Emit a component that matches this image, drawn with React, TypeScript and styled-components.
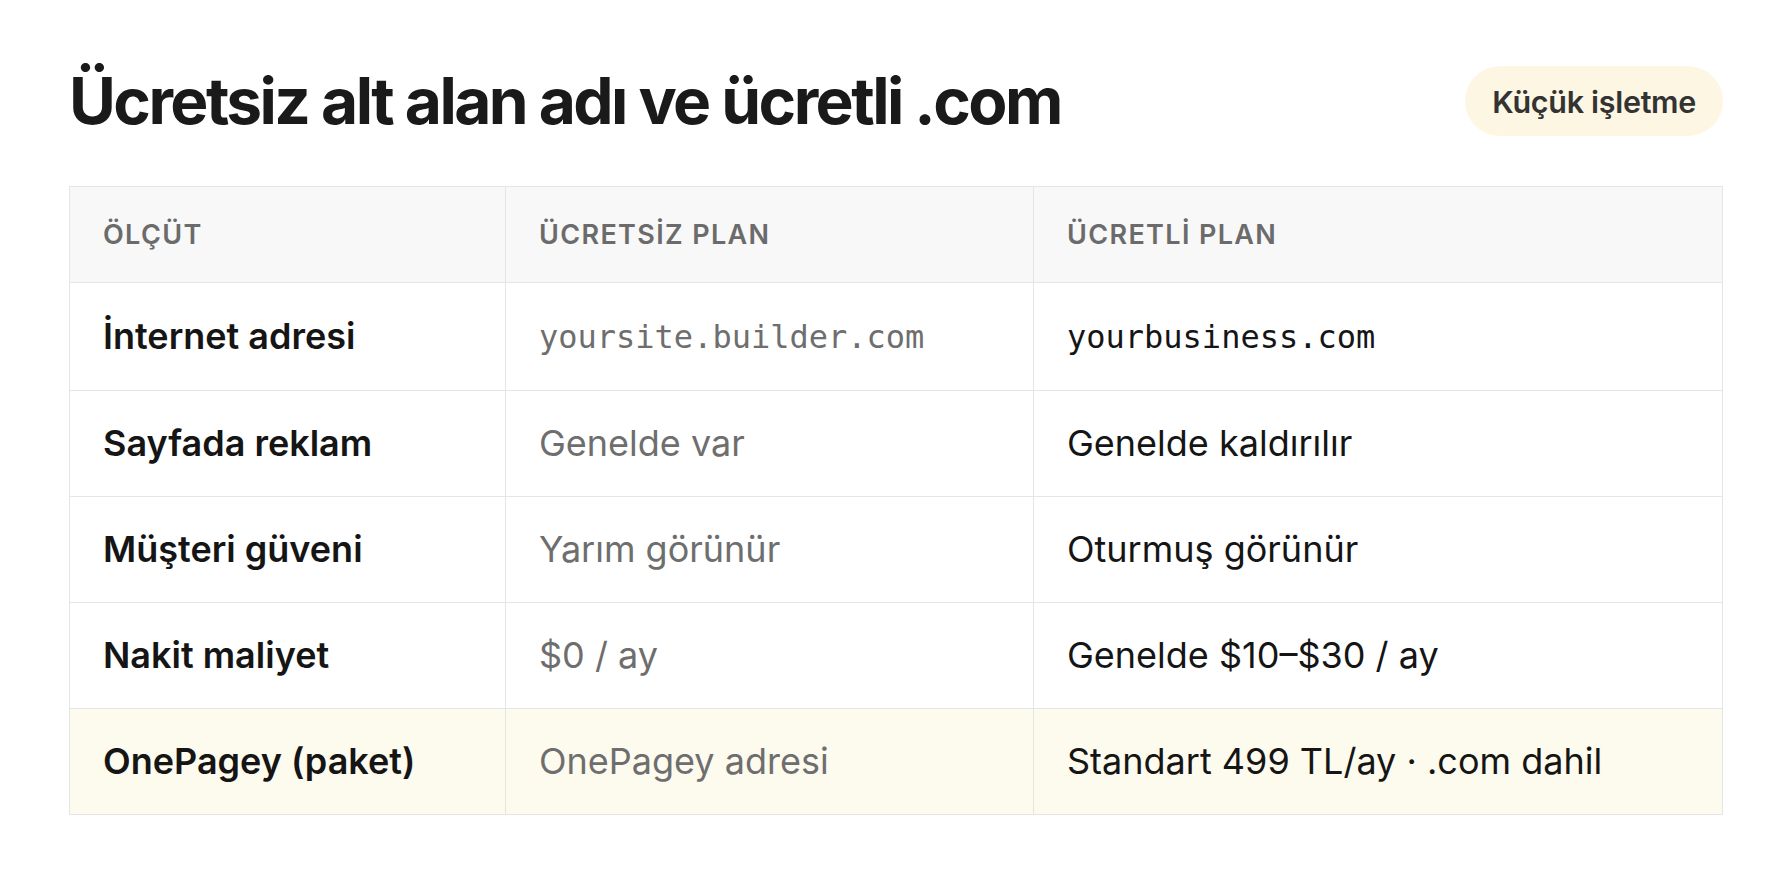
import React from 'react';
import styled, { createGlobalStyle } from 'styled-components';

const GlobalStyle = createGlobalStyle`
  html, body {
    margin: 0;
    padding: 0;
    background: #ffffff;
  }
  body {
    font-family: "Inter", "Noto Sans", sans-serif;
    color: #1a1a1a;
    -webkit-font-smoothing: antialiased;
  }
`;

const Page = styled.div`
  padding: 66px 69px 60px;
`;

const Header = styled.div`
  display: flex;
  align-items: center;
  justify-content: space-between;
  height: 70px;
  margin-bottom: 50px;
`;

const Title = styled.h1`
  margin: 0;
  font-size: 64px;
  line-height: 70px;
  font-weight: 700;
  letter-spacing: -0.04em;
  color: #1a1a1a;
`;

const Badge = styled.span`
  display: inline-flex;
  align-items: center;
  height: 70px;
  padding: 0 27px;
  border-radius: 35px;
  background: #fdf6e3;
  color: #333333;
  font-size: 30.5px;
  font-weight: 600;
  letter-spacing: -0.01em;
  box-sizing: border-box;
`;

const Table = styled.table`
  width: 100%;
  border-collapse: collapse;
  table-layout: fixed;
  border: 1px solid #e5e5e5;
`;

const HeadCell = styled.th`
  text-align: left;
  background: #f8f8f8;
  padding: 32px 33px;
  font-size: 27px;
  line-height: 31px;
  font-weight: 600;
  letter-spacing: 0.05em;
  color: #6b6b6b;
  border: 1px solid #e5e5e5;
`;

const Row = styled.tr<{ $highlight?: boolean }>`
  background: ${({ $highlight }) => ($highlight ? '#fdfaee' : '#ffffff')};
`;

type Tone = 'label' | 'muted' | 'strong';

const Cell = styled.td<{ $tone: Tone }>`
  padding: 31px 33px;
  font-size: 36px;
  line-height: 43px;
  border: 1px solid #e5e5e5;
  font-weight: ${({ $tone }) => ($tone === 'label' ? 600 : 400)};
  color: ${({ $tone }) => ($tone === 'muted' ? '#6e6e6e' : '#151515')};
`;

const Code = styled.code`
  font-family: "DejaVu Sans Mono", "Liberation Mono", monospace;
  font-size: 32px;
`;

interface IRow {
  label: string;
  free: React.ReactNode;
  paid: React.ReactNode;
  highlight?: boolean;
}

const rows: IRow[] = [
  {
    label: 'İnternet adresi',
    free: <Code>yoursite.builder.com</Code>,
    paid: <Code>yourbusiness.com</Code>,
  },
  { label: 'Sayfada reklam', free: 'Genelde var', paid: 'Genelde kaldırılır' },
  { label: 'Müşteri güveni', free: 'Yarım görünür', paid: 'Oturmuş görünür' },
  { label: 'Nakit maliyet', free: '$0 / ay', paid: 'Genelde $10–$30 / ay' },
  {
    label: 'OnePagey (paket)',
    free: 'OnePagey adresi',
    paid: 'Standart 499 TL/ay · .com dahil',
    highlight: true,
  },
];

export default function App() {
  return (
    <Page>
      <GlobalStyle />
      <Header>
        <Title>Ücretsiz alt alan adı ve ücretli .com</Title>
        <Badge>Küçük işletme</Badge>
      </Header>
      <Table>
        <colgroup>
          <col style={{ width: 436 }} />
          <col style={{ width: 528 }} />
          <col />
        </colgroup>
        <thead>
          <tr>
            <HeadCell>ÖLÇÜT</HeadCell>
            <HeadCell>ÜCRETSİZ PLAN</HeadCell>
            <HeadCell>ÜCRETLİ PLAN</HeadCell>
          </tr>
        </thead>
        <tbody>
          {rows.map((r) => (
            <Row key={r.label} $highlight={r.highlight}>
              <Cell $tone="label">{r.label}</Cell>
              <Cell $tone="muted">{r.free}</Cell>
              <Cell $tone="strong">{r.paid}</Cell>
            </Row>
          ))}
        </tbody>
      </Table>
    </Page>
  );
}
